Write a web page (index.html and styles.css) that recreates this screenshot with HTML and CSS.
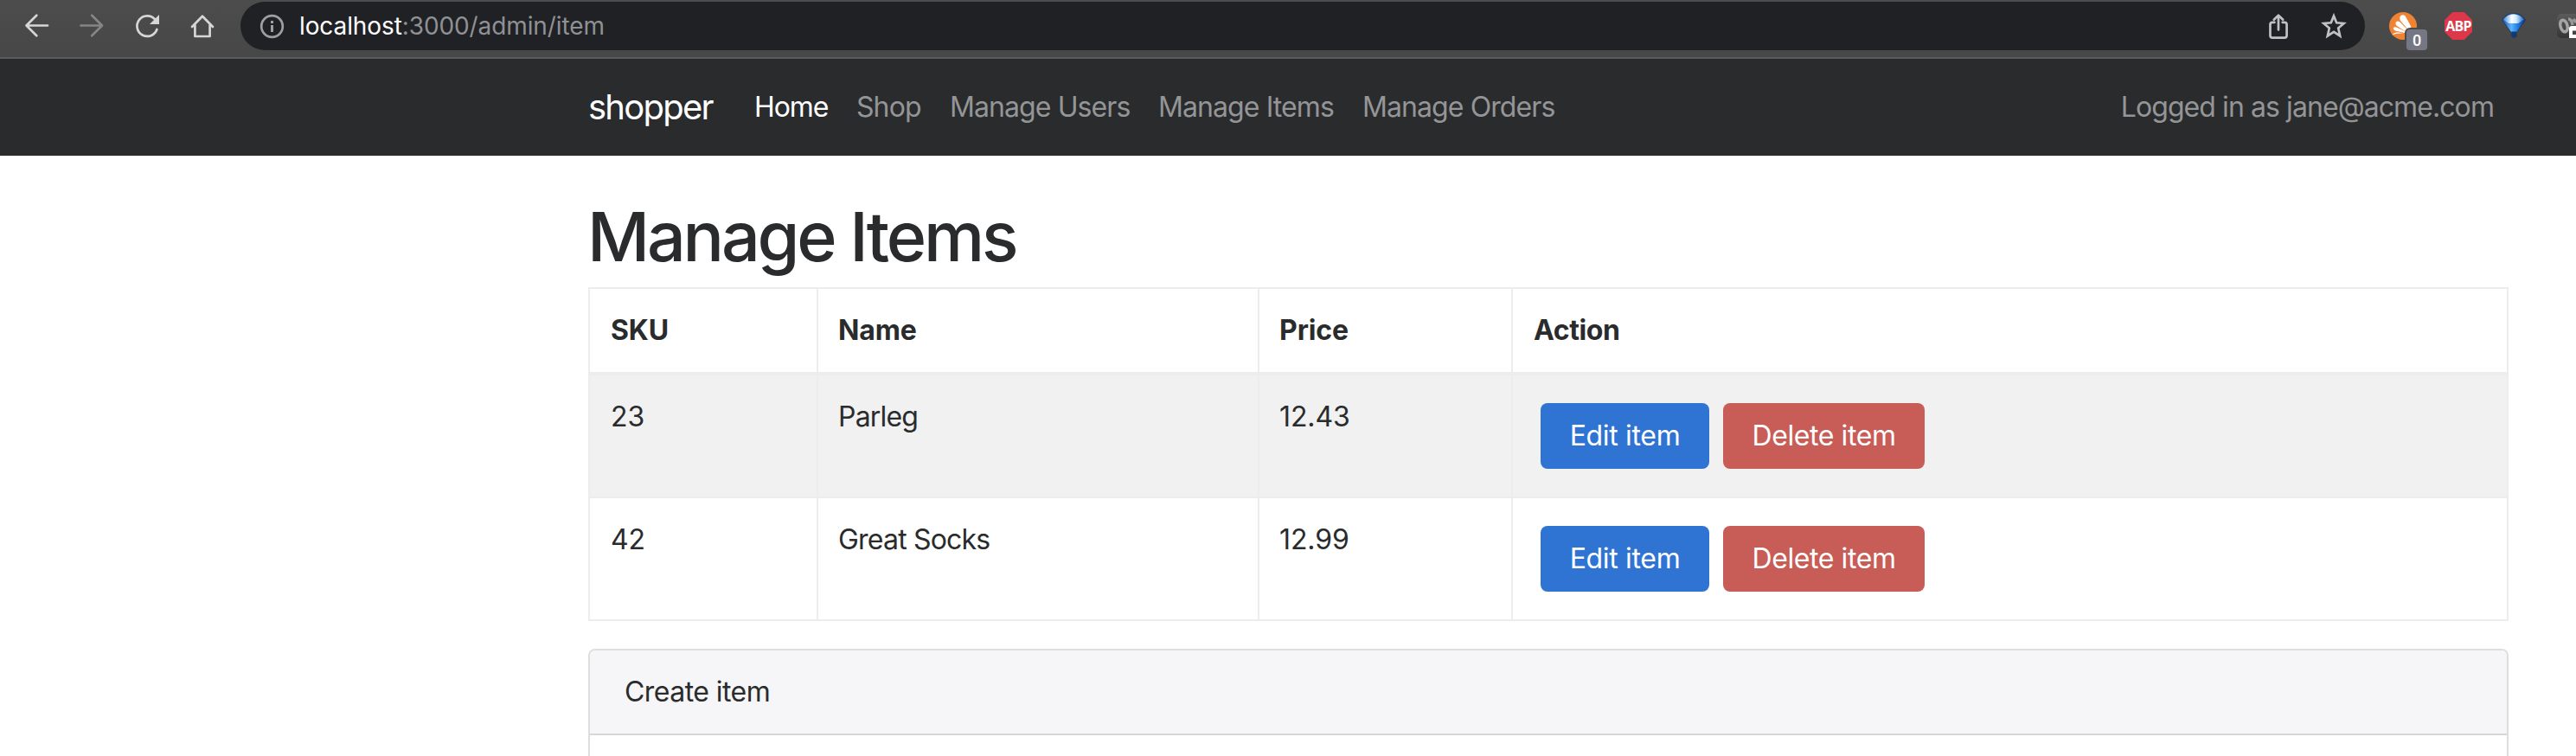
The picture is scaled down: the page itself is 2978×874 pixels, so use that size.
FILE: index.html
```html
<!DOCTYPE html>
<html lang="en">
<head>
<meta charset="utf-8">
<title>Manage Items</title>
<link rel="stylesheet" href="styles.css">
</head>
<body>
<div class="toolbar">
  <div class="controls">
    <svg class="icon" viewBox="26 14 32 32"><path class="line" d="M55 29.5H30.5M42.3 17.8 30.5 29.5 42.3 41.2"/></svg>
    <svg class="icon icon-off" viewBox="90 14 32 32"><path class="line" d="M93.5 29.5H118M106.2 17.8 118 29.5 106.2 41.2"/></svg>
    <svg class="icon" viewBox="154 14 32 32"><path class="line" d="M179 22.2A11.8 11.8 0 1 0 181.4 34"/><path class="solid" d="M184 17V28H173Z"/></svg>
    <svg class="icon" viewBox="218 14 32 32"><path class="line" d="M222 31 234 18.8 246 31M225.4 29V42H242.6V29"/></svg>
  </div>
  <div class="omnibox">
    <svg class="icon icon-info" viewBox="298 14 32 32"><circle class="line" cx="314.5" cy="30.5" r="12.3"/><path class="solid" d="M313 24H316V27H313ZM313 29H316V37H313Z"/></svg>
    <span class="url"><span class="host">localhost</span>:3000/admin/item</span>
    <svg class="icon icon-share" viewBox="2618 14 32 32"><path class="line" d="M2629.5 25.8H2627Q2624.5 25.8 2624.5 28.3V41Q2624.5 43.6 2627 43.6H2641Q2643.6 43.6 2643.6 41V28.3Q2643.6 25.8 2641 25.8H2638.7M2634 34.5V18M2628.8 22.8 2634 17.6 2639.2 22.8"/></svg>
    <svg class="icon icon-star" viewBox="2682 14 32 32"><path class="line" d="M2698 18.4 2701.2 26.3 2709.6 27 2703.2 32.5 2705.2 41.5 2698 36.9 2690.8 41.5 2692.8 32.5 2686.4 27 2694.8 26.3Z"/></svg>
  </div>
  <div class="extensions">
    <div class="ext">
      <svg class="icon" viewBox="0 0 32 32"><circle cx="16" cy="16" r="16" fill="#ef8233"/><g fill="#fff"><path d="M12.2 6.5C12.6 3.2 16.6 2 18.8 4.800L25.500 17 22 20.500 13.500 10.500Q12 8.700 12.200 6.500Z"/><path d="M7.500 12.500C8 10.200 10.500 9.800 12.500 11.500L21 20 19 22.500 9 16Q7 14.500 7.500 12.500Z"/><path d="M5 18.200C5.800 16.800 7.500 17 9 17.700L19 22.500 18 24 7 21.500Q4.500 20.500 5 18.200Z"/><path d="M3.300 26.500Q6 22.700 11 23.600L17 24.500Q8 24 3.300 26.500Z"/></g></svg>
      <span class="badge">0</span>
    </div>
    <div class="ext abp">ABP</div>
    <svg class="icon" viewBox="2890 14 32 32">
      <defs>
        <linearGradient id="gem" x1="0" y1="0" x2="1" y2="0"><stop offset="0" stop-color="#1c4f9d"/><stop offset=".4" stop-color="#5db4ff"/><stop offset=".65" stop-color="#2280e8"/><stop offset="1" stop-color="#0c3479"/></linearGradient>
        <linearGradient id="gem-top" x1="0" y1="0" x2="1" y2="0"><stop offset="0" stop-color="#3a8be0"/><stop offset=".4" stop-color="#fff"/><stop offset=".62" stop-color="#d3ebff"/><stop offset="1" stop-color="#1b62c2"/></linearGradient>
      </defs>
      <path d="M2892.500 23Q2898 15.500 2906 15.500T2919.500 23L2909 38V42.500Q2906 45 2903.300 42.500V38Z" fill="url(#gem)" stroke="#183052" stroke-width=".8"/>
      <path d="M2894 22.500Q2899 16.500 2906 16.500T2918 22.500L2911 27H2900Z" fill="url(#gem-top)"/>
      <path d="M2903.300 36.500H2909V42.500Q2906 45 2903.300 42.500Z" fill="#14396d"/>
    </svg>
    <svg class="icon icon-cut" viewBox="2954 14 24 32">
      <defs><linearGradient id="tile" x1="0" y1="0" x2="0" y2="1"><stop offset="0" stop-color="#5b5b5b"/><stop offset="1" stop-color="#353535"/></linearGradient></defs>
      <rect x="2956" y="16" width="30" height="28" rx="5" fill="url(#tile)"/>
      <ellipse cx="2964" cy="30" rx="4" ry="7" fill="none" stroke="#a5a5a5" stroke-width="3.500" transform="rotate(-15 2964 30)"/>
      <path d="M2969 22Q2973 22 2974 29M2975 22 2978 26" fill="none" stroke="#999" stroke-width="3.500"/>
      <path d="M2970 44V33Q2970 30 2973 30H2978V44Z" fill="#fff"/>
      <path d="M2974 40V35.500H2978V40Z" fill="#444"/>
    </svg>
  </div>
</div>

<nav class="navbar">
  <div class="container navbar-inner">
    <a class="brand">shopper</a>
    <div class="links">
      <a class="link link-home">Home</a>
      <a class="link link-shop">Shop</a>
      <a class="link link-users">Manage Users</a>
      <a class="link link-items">Manage Items</a>
      <a class="link link-orders">Manage Orders</a>
    </div>
    <span class="account">Logged in as jane@acme.com</span>
  </div>
</nav>

<main class="container">
  <h1 class="title">Manage Items</h1>
  <table class="items">
    <colgroup><col class="col-sku"><col class="col-name"><col class="col-price"><col class="col-action"></colgroup>
    <thead>
      <tr><th>SKU</th><th>Name</th><th>Price</th><th class="action-head">Action</th></tr>
    </thead>
    <tbody>
      <tr>
        <td class="num">23</td><td>Parleg</td><td class="num">12.43</td>
        <td><div class="actions"><button class="btn btn-edit">Edit item</button><button class="btn btn-delete">Delete item</button></div></td>
      </tr>
      <tr>
        <td class="num">42</td><td>Great Socks</td><td class="num">12.99</td>
        <td><div class="actions"><button class="btn btn-edit">Edit item</button><button class="btn btn-delete">Delete item</button></div></td>
      </tr>
    </tbody>
  </table>
  <section class="card">
    <div class="card-header">Create item</div>
    <div class="card-body"></div>
  </section>
</main>
</body>
</html>
```
FILE: styles.css
```css
* { box-sizing: border-box; }

body {
  margin: 0;
  background: #fff;
  color: #292b2c;
  font-family: Inter, "Liberation Sans", sans-serif;
  font-size: 32px;
  line-height: 48px;
}

/* Browser toolbar */
.toolbar {
  display: flex;
  align-items: flex-start;
  height: 68px;
  padding: 2px 0 0 26px;
  background: linear-gradient(#4c4c4c, #474747);
  border-bottom: 2px solid #5b5b5b;
}

.controls, .extensions { display: flex; gap: 32px; padding-top: 12px; }

.icon { display: block; flex: none; width: 32px; height: 32px; color: #d6d6d6; }
.icon-off { color: #858585; }
.icon-info { color: #9aa0a6; }
.icon-share, .icon-star { color: #c0c1c3; }
.icon-cut { width: 24px; }

.line { fill: none; stroke: currentColor; stroke-width: 2.7; stroke-linecap: round; stroke-linejoin: round; }
.icon-star .line { stroke-linejoin: miter; }
.solid { fill: currentColor; }

.omnibox {
  display: flex;
  align-items: center;
  width: 2456px;
  height: 56px;
  margin: 0 28px;
  padding: 0 20px;
  border-radius: 28px;
  background: #202125;
}

.url {
  flex: 1;
  margin-left: 16px;
  color: #8f9194;
  font-size: 28px;
  letter-spacing: -0.1px;
}
.host { color: #fff; }
.icon-star { margin-left: 32px; }

.ext { position: relative; width: 32px; height: 32px; }

.badge {
  position: absolute;
  left: 20px;
  top: 20px;
  width: 24px;
  height: 24px;
  border-radius: 4px;
  background: #767785;
  box-shadow: 0 0 0 2px #4a4a4a;
  color: #fff;
  font: 500 18px/26px Roboto, sans-serif;
  text-align: center;
}

.abp {
  display: flex;
  justify-content: center;
  background: #dc3849;
  clip-path: polygon(29% 0, 71% 0, 100% 29%, 100% 71%, 71% 100%, 29% 100%, 0 71%, 0 29%);
  color: #fff;
  font: 700 16px/33px "Open Sans", sans-serif;
  letter-spacing: -0.8px;
}

/* Site navigation */
.container { width: 2220px; margin-left: 680px; }

.navbar { height: 112px; background: #2a2b2d; }

.navbar-inner { display: flex; align-items: center; height: 112px; }

.brand {
  width: 192px;
  color: #fff;
  font-size: 40px;
  line-height: 60px;
  letter-spacing: -1.77px;
}

.links { display: flex; flex: 1; }

.link { flex: none; color: #949596; letter-spacing: -0.91px; }
.link-home { width: 118px; color: #fff; letter-spacing: -1.1px; }
.link-shop { width: 108px; }
.link-users { width: 241px; }
.link-items { width: 236px; }

.account { color: #949596; letter-spacing: -0.92px; margin-right: 17px; }

/* Page content */
.title {
  margin: 0;
  padding: 45px 0 11px;
  font-size: 79px;
  font-weight: 500;
  line-height: 96px;
  letter-spacing: -3.2px;
  text-indent: -1px;
}

.items {
  width: 2220px;
  table-layout: fixed;
  border-collapse: separate;
  border-spacing: 0;
  border: solid #ecedee;
  border-width: 2px 0 0 2px;
}

.col-sku { width: 264px; }
.col-name { width: 510px; }
.col-price { width: 293px; }
.col-action { width: 1151px; }

.items th, .items td {
  padding: 24px 22px 0 23px;
  border: solid #ecedee;
  border-width: 0 2px 2px 0;
  text-align: left;
  vertical-align: top;
}
.items th:first-child, .items td:first-child, .items th:last-child { padding-left: 24px; }

.items th { height: 100px; border-bottom-width: 4px; border-bottom-color: #ebedef; letter-spacing: -0.1px; }
.items th.action-head { letter-spacing: -0.4px; }
.items td { height: 142px; letter-spacing: -0.8px; }
.items td.num { letter-spacing: -0.1px; }
.items tbody tr:first-child td { background: #f1f1f1; }

.actions { display: flex; gap: 16px; padding: 8px 0 0 9px; }

.btn {
  height: 76px;
  padding: 0;
  border: 0;
  border-radius: 8px;
  color: #fff;
  font: inherit;
  letter-spacing: -0.33px;
}
.btn-edit { width: 195px; background: #2f74d3; }
.btn-delete { width: 233px; background: #c85c56; letter-spacing: -0.41px; }

.card {
  margin-top: 32px;
  border: 2px solid #dedede;
  border-bottom: 0;
  border-radius: 8px 8px 0 0;
  overflow: hidden;
}
.card-header {
  height: 98px;
  padding: 24px 40px;
  border-bottom: 2px solid #d7d7d9;
  background: #f6f6f8;
  letter-spacing: -0.55px;
}
.card-body { height: 24px; }
```
